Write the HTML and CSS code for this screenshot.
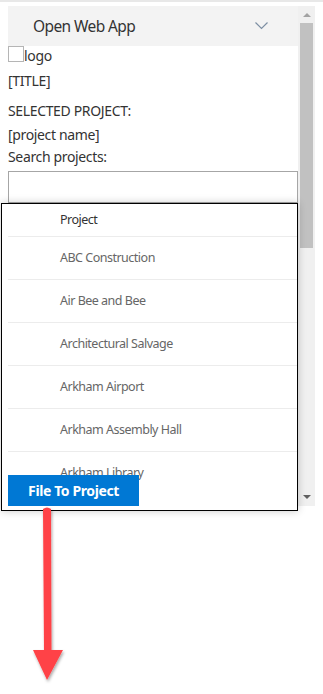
FILE: index.html
```html
<!DOCTYPE html>
<html lang="en">
<head>
    <meta charset="UTF-8">
    <meta name="viewport" content="width=device-width, initial-scale=1.0">
    <title>File To Project</title>
    <link rel="stylesheet" href="styles.css">
</head>
<body>
    <div class="frame-line"></div>
    <div class="pane">
        <div class="content">
            <div class="app-header">
                <span class="app-title">Open Web App</span>
                <svg class="chevron" width="13" height="8" viewBox="0 0 13 8">
                    <polyline points="0.5,0.5 6.5,6.5 12.5,0.5" fill="none" stroke="#7d8fa3" stroke-width="1.2"/>
                </svg>
            </div>
            <div class="logo-row">
                <span class="broken-img"></span><span class="logo-text">logo</span>
            </div>
            <div class="title">[TITLE]</div>
            <div class="label selected">SELECTED PROJECT:</div>
            <div class="label project-name">[project name]</div>
            <label class="label search-label" for="search">Search projects:</label>
            <input class="search-input" type="text" id="search">
        </div>
        <div class="scrollbar">
            <span class="arrow-up"></span>
            <div class="thumb"></div>
            <span class="arrow-down"></span>
        </div>
    </div>

    <div class="popup">
        <div class="project-list">
            <div class="list-head">Project</div>
            <div class="list-row">ABC Construction</div>
            <div class="list-row">Air Bee and Bee</div>
            <div class="list-row">Architectural Salvage</div>
            <div class="list-row">Arkham Airport</div>
            <div class="list-row">Arkham Assembly Hall</div>
            <div class="list-row">Arkham Library</div>
        </div>
        <button class="file-btn">File To Project</button>
    </div>

    <svg class="annotation" width="40" height="182" viewBox="0 0 40 182">
        <defs>
            <filter id="shadow" x="-50%" y="-10%" width="200%" height="130%">
                <feDropShadow dx="1" dy="2" stdDeviation="1.5" flood-color="#000" flood-opacity="0.35"/>
            </filter>
        </defs>
        <g filter="url(#shadow)">
            <path d="M13 4 Q17 1 21 4 L21.5 145 L33 145 L17 175 L3 145 L14 145 Z" fill="#ff4346"/>
        </g>
    </svg>
</body>
</html>
```

FILE: styles.css
```css
body {
    margin: 0;
    font-family: "Segoe UI", "Noto Sans", sans-serif;
    font-size: 14px;
    letter-spacing: -0.35px;
    color: #333;
    background-color: white;
    position: relative;
    height: 694px;
    overflow: hidden;
}
.frame-line {
    height: 2px;
    background-color: #e8e8e8;
}
.pane {
    display: flex;
    margin: 4px 0 0 8px;
    width: 307px;
    height: 500px;
}
.content {
    width: 290px;
    overflow: hidden;
}
.app-header {
    display: flex;
    align-items: center;
    height: 40px;
    padding: 0 30px 0 25px;
    background-color: #f3f3f3;
}
.app-title {
    flex: 1;
    font-size: 15.5px;
    letter-spacing: -0.6px;
    color: #333;
}
.chevron {
    display: block;
}
.logo-row {
    display: flex;
    align-items: flex-start;
    height: 16px;
}
.broken-img {
    width: 14px;
    height: 14px;
    border: 1px solid #b5b5b5;
}
.logo-text {
    line-height: 20px;
}
.title,
.label {
    display: block;
    line-height: 20px;
}
.title {
    margin-top: 9px;
}
.selected {
    margin-top: 10px;
}
.project-name {
    margin-top: 4px;
}
.search-label {
    margin-top: 2px;
}
.search-input {
    display: block;
    width: 100%;
    height: 32px;
    margin: 4px 0 0;
    border: 1px solid #a6a6a6;
    box-sizing: border-box;
    font-family: inherit;
}
.scrollbar {
    position: relative;
    width: 17px;
    background-color: #f0f0f0;
}
.arrow-up,
.arrow-down {
    position: absolute;
    left: 5px;
    width: 0;
    height: 0;
    border-left: 4px solid transparent;
    border-right: 4px solid transparent;
}
.arrow-up {
    top: 7px;
    border-bottom: 4px solid #a3a3a3;
}
.arrow-down {
    bottom: 7px;
    border-top: 4px solid #606060;
}
.thumb {
    position: absolute;
    top: 17px;
    left: 2px;
    width: 13px;
    height: 225px;
    background-color: #c1c1c1;
}
.popup {
    position: absolute;
    left: 1px;
    top: 203px;
    width: 295px;
    height: 306px;
    border: 1px solid #000;
    background-color: white;
    box-shadow: 0 0 8px rgba(0, 0, 0, 0.22);
    overflow: hidden;
}
.project-list {
    margin-left: 6px;
    font-size: 12.5px;
    letter-spacing: -0.5px;
}
.list-head {
    height: 32px;
    line-height: 32px;
    padding-left: 52px;
    color: #333;
}
.list-row {
    height: 42px;
    line-height: 42px;
    padding-left: 52px;
    border-top: 1px solid #ececec;
    color: #666;
}
.file-btn {
    position: absolute;
    left: 6px;
    bottom: 4px;
    width: 131px;
    height: 31px;
    border: none;
    background-color: #0078d4;
    color: white;
    font-family: inherit;
    font-size: 14px;
    font-weight: 700;
    letter-spacing: -0.4px;
}
.annotation {
    position: absolute;
    left: 30px;
    top: 505px;
}
```
